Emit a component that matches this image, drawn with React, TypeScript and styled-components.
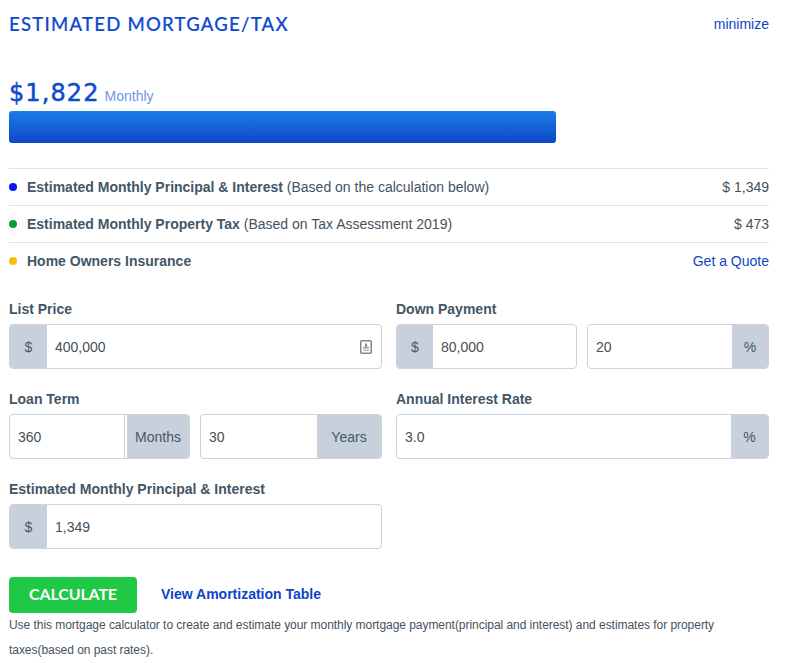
import styled, { createGlobalStyle } from "styled-components";

const GlobalStyle = createGlobalStyle`
  * { box-sizing: border-box; }
  body {
    margin: 0;
    background: #fff;
    font-family: "Liberation Sans", Arial, sans-serif;
  }
`;

const Panel = styled.div`
  width: 788px;
  height: 663px;
  padding: 0 19px 0 9px;
  overflow: hidden;
`;

const Header = styled.header`
  height: 48px;
  display: flex;
  justify-content: space-between;
  align-items: center;
`;

const Title = styled.h2`
  margin: 0 0 1px;
  font-family: Lato, sans-serif;
  font-size: 18.5px;
  font-weight: 500;
  letter-spacing: 1.25px;
  -webkit-text-stroke: 0.2px #0e4bce;
  color: #0e4bce;
`;

const TextLink = styled.a<{ $bold?: boolean }>`
  font-size: 14px;
  font-weight: ${props => (props.$bold ? 700 : 400)};
  color: #0e45c8;
  text-decoration: none;
`;

const Total = styled.div`
  margin-top: 28px;
  height: 35px;
  display: flex;
  align-items: baseline;
  gap: 5px;
`;

const Amount = styled.span`
  font-family: "DejaVu Sans", sans-serif;
  font-size: 24px;
  font-weight: 500;
  letter-spacing: 1.1px;
  -webkit-text-stroke: 0.5px #0e4bce;
  color: #0e4bce;
  line-height: 35px;
`;

const Period = styled.span`
  font-size: 14px;
  color: #6f93e6;
`;

const Bar = styled.div`
  width: 547px;
  height: 32px;
  border-radius: 3px;
  background: linear-gradient(#1b7ce8, #0e47c8);
`;

const Breakdown = styled.ul`
  list-style: none;
  margin: 25px 0 0;
  padding: 0;
`;

const Row = styled.li`
  height: 37px;
  display: flex;
  align-items: center;
  border-top: 1px solid #dfe1e5;
  font-size: 14px;
  color: #44525f;
`;

const Dot = styled.span<{ $color: string }>`
  width: 8px;
  height: 8px;
  border-radius: 50%;
  margin-right: 10px;
  background: ${props => props.$color};
`;

const RowLabel = styled.span`
  flex: 1;
  strong {
    color: #435666;
  }
`;

const Fields = styled.div`
  margin-top: 21px;
  display: grid;
  grid-template-columns: 373px 373px;
  column-gap: 14px;
  row-gap: 21px;
`;

const Field = styled.div`
  min-width: 0;
`;

const Label = styled.div`
  height: 24px;
  font-size: 14px;
  line-height: 19px;
  font-weight: 700;
  color: #435666;
`;

const Pair = styled.div`
  display: flex;
  gap: 10px;
`;

const InputGroup = styled.div<{ $width?: number }>`
  position: relative;
  flex: ${props => (props.$width ? `0 0 ${props.$width}px` : "1")};
  height: 45px;
  display: flex;
  border: 1px solid #cbd4dd;
  border-radius: 4px;
  overflow: hidden;
  background: #fff;
`;

const Addon = styled.span<{ $width: number; $divided?: boolean }>`
  flex: 0 0 ${props => props.$width}px;
  display: flex;
  align-items: center;
  justify-content: center;
  background: #c8d1db;
  font-size: 14px;
  color: #44586a;
  ${props => (props.$divided ? "box-shadow: -2px 0 0 #fff, -3px 0 0 #cbd4dd;" : "")}
`;

const Input = styled.input`
  flex: 1;
  min-width: 0;
  height: 100%;
  border: 0;
  outline: 0;
  padding: 0 8px;
  background: transparent;
  font-family: inherit;
  font-size: 14px;
  color: #484f56;
`;

const ContactIcon = styled.svg`
  position: absolute;
  right: 9px;
  top: 15px;
`;

const Actions = styled.div`
  margin-top: 28px;
  display: flex;
  align-items: center;
  gap: 24px;
  ${TextLink} {
    margin-top: -2px;
  }
`;

const CalculateButton = styled.button`
  width: 128px;
  height: 36px;
  padding: 0 0 3px;
  border: 0;
  border-radius: 4px;
  background: #1fc845;
  color: #fff;
  font-family: Lato, sans-serif;
  font-size: 16px;
  font-weight: 700;
  letter-spacing: -0.15px;
  cursor: pointer;
`;

const Note = styled.p`
  margin: 0;
  font-size: 12px;
  line-height: 25px;
  letter-spacing: -0.045px;
  color: #44525f;
`;

const rows = [
  { color: "#0a14fa", label: "Estimated Monthly Principal & Interest", note: " (Based on the calculation below)", value: "$ 1,349" },
  { color: "#0c9c34", label: "Estimated Monthly Property Tax", note: " (Based on Tax Assessment 2019)", value: "$ 473" },
  { color: "#fcbc05", label: "Home Owners Insurance", note: "" },
];

function App() {
  return (
    <Panel>
      <GlobalStyle />
      <Header>
        <Title>ESTIMATED MORTGAGE/TAX</Title>
        <TextLink href="#">minimize</TextLink>
      </Header>

      <Total>
        <Amount>$1,822</Amount>
        <Period>Monthly</Period>
      </Total>
      <Bar />

      <Breakdown>
        {rows.map(row => (
          <Row key={row.label}>
            <Dot $color={row.color} />
            <RowLabel>
              <strong>{row.label}</strong>
              {row.note}
            </RowLabel>
            {row.value ? row.value : <TextLink href="#">Get a Quote</TextLink>}
          </Row>
        ))}
      </Breakdown>

      <Fields>
        <Field>
          <Label>List Price</Label>
          <InputGroup>
            <Addon $width={37}>$</Addon>
            <Input defaultValue="400,000" />
            <ContactIcon width="12" height="14" viewBox="0 0 12 14" fill="none">
              <rect x="0.75" y="0.75" width="10.5" height="12.5" rx="1" stroke="#858585" strokeWidth="1.5" />
              <path d="M6 2.6 7.5 6.4H4.5Z" fill="#6f6f6f" />
              <rect x="3" y="7" width="6" height="1.5" fill="#9a9a9a" />
              <rect x="3" y="9.4" width="6" height="1.5" fill="#bdbdbd" />
            </ContactIcon>
          </InputGroup>
        </Field>
        <Field>
          <Label>Down Payment</Label>
          <Pair>
            <InputGroup $width={181}>
              <Addon $width={36}>$</Addon>
              <Input defaultValue="80,000" />
            </InputGroup>
            <InputGroup>
              <Input defaultValue="20" />
              <Addon $width={36}>%</Addon>
            </InputGroup>
          </Pair>
        </Field>
        <Field>
          <Label>Loan Term</Label>
          <Pair>
            <InputGroup $width={181}>
              <Input defaultValue="360" />
              <Addon $width={62} $divided>Months</Addon>
            </InputGroup>
            <InputGroup>
              <Input defaultValue="30" />
              <Addon $width={64}>Years</Addon>
            </InputGroup>
          </Pair>
        </Field>
        <Field>
          <Label>Annual Interest Rate</Label>
          <InputGroup>
            <Input defaultValue="3.0" />
            <Addon $width={37}>%</Addon>
          </InputGroup>
        </Field>
        <Field>
          <Label>Estimated Monthly Principal &amp; Interest</Label>
          <InputGroup>
            <Addon $width={37}>$</Addon>
            <Input defaultValue="1,349" />
          </InputGroup>
        </Field>
      </Fields>

      <Actions>
        <CalculateButton>CALCULATE</CalculateButton>
        <TextLink href="#" $bold>View Amortization Table</TextLink>
      </Actions>
      <Note>
        Use this mortgage calculator to create and estimate your monthly mortgage payment(principal and interest) and estimates for property
        taxes(based on past rates).
      </Note>
    </Panel>
  );
}

export default App;
